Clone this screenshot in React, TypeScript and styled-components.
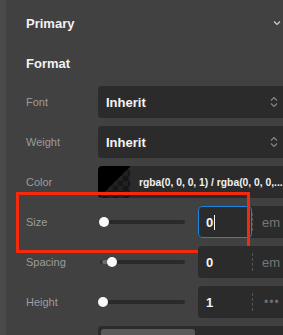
import React from "react";
import styled, { createGlobalStyle } from "styled-components";

const Global = createGlobalStyle`
  html, body { margin: 0; padding: 0; background: #414141; overflow: hidden; }
  body { font-family: "Liberation Sans", Arial, sans-serif; }
`;

const Page = styled.div`
  display: flex;
  width: 283px;
  height: 335px;
  overflow: hidden;
  background: #414141;
`;

const Strip = styled.div`
  width: 6px;
  flex: none;
  background: #4a4a4a;
`;

const Panel = styled.div`
  width: 284px;
  flex: none;
  box-sizing: border-box;
  padding-left: 20px;
  display: flex;
  flex-direction: column;
  & > * { flex: none; }
`;

const SectionHeader = styled.div`
  height: 46px;
  display: flex;
  align-items: center;
  justify-content: space-between;
  padding-right: 9px;
  color: #f2f2f2;
  font-size: 13px;
  font-weight: 700;
`;

const SubHeader = styled.div`
  height: 34px;
  display: flex;
  align-items: center;
  color: #f2f2f2;
  font-size: 13px;
  font-weight: 700;
`;

const Rows = styled.div`
  padding-top: 6px;
  display: flex;
  flex-direction: column;
  gap: 8px;
`;

const Row = styled.div`
  position: relative;
  display: grid;
  grid-template-columns: 72px 1fr;
  align-items: center;
  height: 32px;
`;

const Label = styled.div`
  color: #9c9c9c;
  font-size: 11px;
`;

const Box = styled.div`
  height: 32px;
  background: #2b2b2b;
  border-radius: 4px;
  display: flex;
  align-items: center;
  box-sizing: border-box;
  overflow: hidden;
`;

const Select = styled(Box)`
  padding: 0 12px 0 8px;
  justify-content: space-between;
  color: #f4f4f4;
  font-size: 13px;
  font-weight: 700;
`;

const Swatch = styled.div`
  width: 32px;
  height: 32px;
  flex: none;
  border-radius: 4px 0 0 4px;
  background:
    linear-gradient(to bottom right, #000 0 50%, transparent 50% 100%),
    repeating-conic-gradient(#161616 0 25%, #212121 0 50%) 0 0 / 10px 10px;
`;

const ColorText = styled.div`
  padding-left: 9px;
  color: #f0f0f0;
  font-size: 10.3px;
  font-weight: 700;
  white-space: nowrap;
`;

const SliderGroup = styled.div`
  display: grid;
  grid-template-columns: 90px 1fr;
  gap: 10px;
  align-items: center;
`;

const Track = styled.div`
  position: relative;
  margin-left: 2px;
  width: 85px;
  height: 4px;
  background: #2a2a2a;
  border-radius: 2px;
`;

const Fill = styled.div`
  position: absolute;
  left: 2px;
  top: 0;
  height: 4px;
  background: #6a6a6a;
  border-radius: 2px;
`;

const Thumb = styled.div`
  position: absolute;
  top: -3px;
  width: 10px;
  height: 10px;
  margin-left: -5px;
  border-radius: 50%;
  background: #fafafa;
`;

const InputBox = styled(Box)`
  padding: 0;
`;

const Num = styled.div<{ $focus?: boolean }>`
  width: 54px;
  height: 32px;
  flex: none;
  box-sizing: border-box;
  display: flex;
  align-items: center;
  padding-left: ${(p) => (p.$focus ? 7 : 8)}px;
  color: #f4f4f4;
  font-size: 13px;
  font-weight: 700;
  border-radius: 4px;
  border: ${(p) => (p.$focus ? "1px solid #1b84dc" : "none")};
`;

const Caret = styled.span`
  display: inline-block;
  width: 1px;
  height: 15px;
  background: #f4f4f4;
  margin-left: 1px;
`;

const Unit = styled.div`
  flex: 1;
  height: 18px;
  border-left: 1px dashed #555;
  display: flex;
  align-items: center;
  padding-left: 9px;
  color: #777;
  font-size: 13px;
`;

const Dots = styled(Unit)`
  font-size: 12px;
  letter-spacing: 1px;
  padding-left: 11px;
  color: #6e6e6e;
`;

const Segments = styled(Box)`
  padding: 3px;
  align-items: stretch;
`;

const Segment = styled.div`
  width: 94px;
  background: #5a5a5a;
  border-radius: 3px;
`;

const Highlight = styled.div`
  position: absolute;
  left: -10px;
  top: -14px;
  width: 234px;
  height: 61px;
  box-sizing: border-box;
  border: 3px solid #f52a0c;
  pointer-events: none;
`;

const ChevronDown = () => (
  <svg width="8" height="6" viewBox="0 0 8 6" fill="none">
    <path d="M1 1.5 L4 4.5 L7 1.5" stroke="#d0d0d0" strokeWidth="1.2" />
  </svg>
);

const UpDown = () => (
  <svg width="8" height="12" viewBox="0 0 8 12" fill="none">
    <path d="M1 4.5 L4 1.5 L7 4.5 M1 7.5 L4 10.5 L7 7.5" stroke="#8a8a8a" strokeWidth="1.1" />
  </svg>
);

const SliderRow = ({
  label,
  pos,
  value,
  unit,
  focus,
  dots,
  children,
}: {
  label: string;
  pos: number;
  value: string;
  unit?: string;
  focus?: boolean;
  dots?: boolean;
  children?: React.ReactNode;
}) => (
  <Row>
    <Label>{label}</Label>
    <SliderGroup>
      <Track>
        {pos > 2 && <Fill style={{ width: pos - 2 }} />}
        <Thumb style={{ left: pos }} />
      </Track>
      <InputBox>
        <Num $focus={focus}>
          {value}
          {focus && <Caret />}
        </Num>
        {dots ? <Dots>•••</Dots> : <Unit>{unit}</Unit>}
      </InputBox>
    </SliderGroup>
    {children}
  </Row>
);

export default function App() {
  return (
    <>
      <Global />
      <Page>
        <Strip />
        <Panel>
          <SectionHeader>
            <span>Primary</span>
            <ChevronDown />
          </SectionHeader>
          <SubHeader>Format</SubHeader>
          <Rows>
            <Row>
              <Label>Font</Label>
              <Select>
                <span>Inherit</span>
                <UpDown />
              </Select>
            </Row>
            <Row>
              <Label>Weight</Label>
              <Select>
                <span>Inherit</span>
                <UpDown />
              </Select>
            </Row>
            <Row>
              <Label>Color</Label>
              <Box>
                <Swatch />
                <ColorText>rgba(0, 0, 0, 1) / rgba(0, 0, 0,...</ColorText>
              </Box>
            </Row>
            <SliderRow label="Size" pos={4} value="0" unit="em" focus>
              <Highlight />
            </SliderRow>
            <SliderRow label="Spacing" pos={12} value="0" unit="em" />
            <SliderRow label="Height" pos={3} value="1" dots />
            <Row>
              <Label />
              <Segments>
                <Segment />
              </Segments>
            </Row>
          </Rows>
        </Panel>
      </Page>
    </>
  );
}
